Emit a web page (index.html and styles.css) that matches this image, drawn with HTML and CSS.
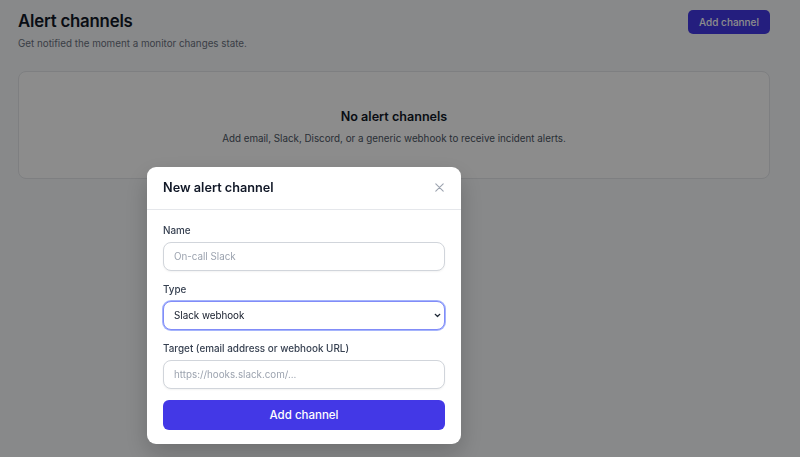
FILE: index.html
```html
<!DOCTYPE html>
<html lang="en">
<head>
<meta charset="utf-8">
<title>Alert channels</title>
<link rel="stylesheet" href="styles.css">
</head>
<body>
<main class="page">
  <header class="page-head">
    <div>
      <h1 class="title">Alert channels</h1>
      <p class="subtitle">Get notified the moment a monitor changes state.</p>
    </div>
    <button class="btn-primary small">Add channel</button>
  </header>
  <section class="empty-card">
    <h2 class="empty-title">No alert channels</h2>
    <p class="empty-text">Add email, Slack, Discord, or a generic webhook to receive incident alerts.</p>
  </section>
</main>

<div class="overlay">
  <div class="modal">
    <div class="modal-head">
      <h3 class="modal-title">New alert channel</h3>
      <button class="close" aria-label="Close">
        <svg width="9" height="9" viewBox="0 0 9 9"><path d="M0.8 0.8L8.2 8.2M8.2 0.8L0.8 8.2" stroke="#9ca3af" stroke-width="1.1" stroke-linecap="round"/></svg>
      </button>
    </div>
    <form class="modal-body">
      <label class="field">
        <span class="label">Name</span>
        <input class="input" type="text" placeholder="On-call Slack">
      </label>
      <label class="field">
        <span class="label">Type</span>
        <span class="select-wrap">
          <select class="input select focused">
            <option>Slack webhook</option>
          </select>
          <svg class="chevron" width="7" height="5" viewBox="0 0 7 5"><path d="M1.2 1.3L3.5 3.5L5.8 1.3" fill="none" stroke="#1f2937" stroke-width="1.2" stroke-linecap="round" stroke-linejoin="round"/></svg>
        </span>
      </label>
      <label class="field">
        <span class="label">Target (email address or webhook URL)</span>
        <input class="input" type="text" placeholder="https://hooks.slack.com/...">
      </label>
      <button type="button" class="btn-primary big">Add channel</button>
    </form>
  </div>
</div>
</body>
</html>
```

FILE: styles.css
```css
* { box-sizing: border-box; }
html, body { margin: 0; height: 100%; }
body {
  font-family: Inter, "Noto Sans", "Liberation Sans", sans-serif;
  background: #f8fafc;
  color: #111827;
}
.page { padding: 10px 30px 0 18px; }
.page-head {
  display: flex;
  justify-content: space-between;
  align-items: flex-start;
}
.title {
  margin: 0;
  font-size: 16.8px;
  font-weight: 600;
  line-height: 22px;
  letter-spacing: -0.2px;
}
.subtitle {
  margin: 5px 0 0;
  font-size: 9.8px;
  color: #6b7280;
  line-height: 13px;
}
.btn-primary {
  border: 0;
  background: #4338e6;
  color: #fff;
  font-family: inherit;
  font-weight: 500;
  cursor: pointer;
}
.btn-primary.small {
  font-size: 10px;
  padding: 0 11px;
  height: 24px;
  border-radius: 5px;
}
.empty-card {
  margin-top: 21px;
  border: 1px solid #e5e7eb;
  border-radius: 8px;
  background: #fff;
  height: 108px;
  text-align: center;
  padding-top: 37px;
}
.empty-title {
  margin: 0;
  font-size: 12.6px;
  font-weight: 600;
  line-height: 16px;
}
.empty-text {
  margin: 8px 0 0;
  font-size: 9.8px;
  color: #4b5563;
}
.overlay {
  position: fixed;
  inset: 0;
  background: rgba(0, 0, 0, 0.45);
}
.modal {
  position: absolute;
  left: 147px;
  top: 167px;
  width: 314px;
  background: #fff;
  border-radius: 9px;
  box-shadow: 0 10px 25px rgba(0,0,0,0.2);
}
.modal-head {
  display: flex;
  justify-content: space-between;
  align-items: center;
  height: 43px;
  padding: 0 17px 2px 16px;
  border-bottom: 1px solid #e5e7eb;
}
.modal-title {
  margin: 0;
  font-size: 12.7px;
  font-weight: 600;
}
.close {
  border: 0;
  background: none;
  padding: 0;
  width: 9px;
  height: 9px;
  display: flex;
  align-items: center;
  justify-content: center;
}
.modal-body {
  padding: 14px 16px 14px 16px;
  display: flex;
  flex-direction: column;
}
.field { display: flex; flex-direction: column; margin-bottom: 12px; }
.field:nth-last-of-type(1) { margin-bottom: 11px; }
.label {
  font-size: 9.9px;
  font-weight: 500;
  color: #374151;
  line-height: 13px;
  margin-bottom: 5px;
}
.input {
  height: 29px;
  width: 100%;
  border: 1px solid #d1d5db;
  border-radius: 8px;
  padding: 0 10px;
  font-family: inherit;
  font-size: 9.8px;
  color: #111827;
  background: #fff;
  box-shadow: 0 1px 2px rgba(0,0,0,0.05);
  outline: none;
}
.input::placeholder { color: #9ca3af; }
.select-wrap { position: relative; display: block; }
.select {
  -webkit-appearance: none;
  appearance: none;
  display: block;
}
.chevron {
  position: absolute;
  right: 4px;
  top: 12px;
  pointer-events: none;
}
.focused {
  border-color: #818cf8;
  box-shadow: 0 0 0 1px #a5b4fc;
}
.btn-primary.big {
  height: 30px;
  border-radius: 6px;
  font-size: 11.5px;
  width: 100%;
}
```
